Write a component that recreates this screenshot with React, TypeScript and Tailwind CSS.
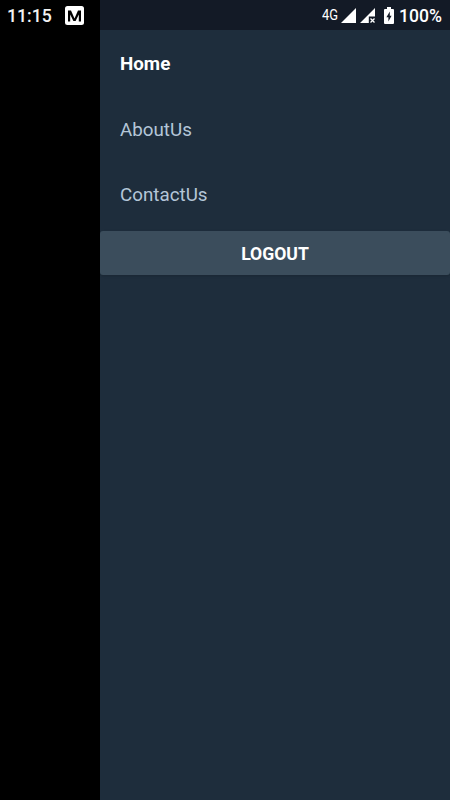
const links = [
  { label: 'Home', className: 'font-bold text-white' },
  { label: 'AboutUs', className: 'text-[#b4c6d8]' },
  { label: 'ContactUs', className: 'text-[#b4c6d8]' },
];

export default function App() {
  return (
    <div className="flex h-screen w-full overflow-hidden bg-black font-[Roboto,sans-serif]">
      {/* Dimmed page */}
      <div className="w-[100px] shrink-0">
        <div className="flex h-[30px] items-center pl-[7px] text-[#f2f2f2]">
          <span className="w-[58px] pt-0.5 text-[17.7px] font-medium leading-[32px]">11:15</span>
          <svg className="h-[19px] w-[19px]" viewBox="0 0 19 19">
            <rect width="19" height="19" rx="2.5" fill="white" />
            <path d="M3 15.5v-11h3l3.5 8 3.5-8h3v11h-2.2V8.6L10.6 15H8.4L5.2 8.6v6.9z" fill="black" />
          </svg>
        </div>
      </div>

      {/* Drawer */}
      <div className="flex-1 bg-[#1e2d3c]">
        <div className="flex h-[30px] items-center justify-end bg-[#131a26] pr-2 text-white">
          <span className="mr-[3px] w-4 origin-left scale-x-[0.92] text-[14px] leading-[30px]">4G</span>
          <svg className="mr-1 h-[15px] w-[15px]" viewBox="0 0 15 15">
            <path d="M15 0v15H0z" fill="white" />
          </svg>
          <svg className="mr-[9px] h-[15px] w-[15px]" viewBox="0 0 15 15">
            <path d="M15 0v8.5H8.8V15H0z" fill="white" />
            <path d="m10.5 10.5 4 4m0-4-4 4" stroke="white" strokeWidth="1.3" />
          </svg>
          <svg className="mr-[5px] h-[17px] w-[10px]" viewBox="0 0 10 17">
            <path d="M3 0h4v2h2q1 0 1 1v13q0 1-1 1H1q-1 0-1-1V3q0-1 1-1h2z" fill="white" />
            <path d="M5.8 4.5 2.4 10.3h2v4.2L7.6 8.8H5.8z" fill="#131a26" />
          </svg>
          <span className="pt-0.5 text-[17.6px] font-medium leading-[32px]">100%</span>
        </div>

        <nav className="pt-[1.5px] text-[18.8px]">
          {links.map((link) => (
            <div key={link.label} className="flex h-[65.5px] items-center pl-5">
              <span className={link.className}>{link.label}</span>
            </div>
          ))}
        </nav>

        <button className="mt-[3px] h-[44px] w-full rounded-[3px] bg-[#3b4d5c] pt-0.5 text-[17.6px] font-bold text-white shadow-sm">LOGOUT</button>
      </div>
    </div>
  );
}
